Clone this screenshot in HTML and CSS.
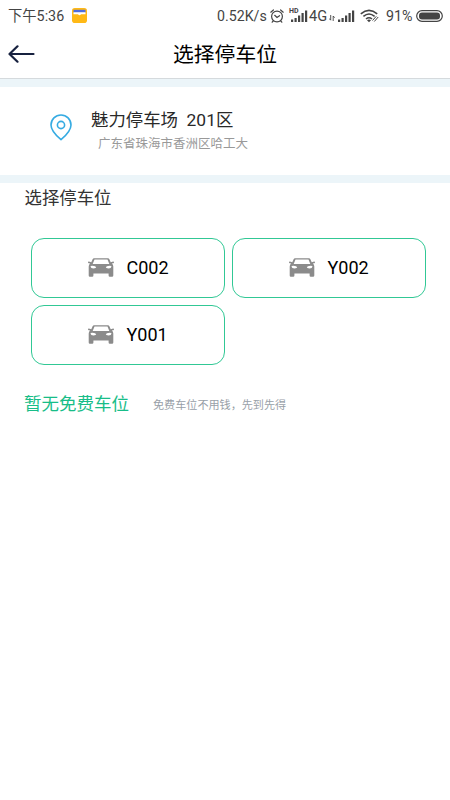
FILE: index.html
```html
<!DOCTYPE html>
<html lang="zh-CN">
<head>
<meta charset="utf-8">
<title>选择停车位</title>
<link rel="stylesheet" href="styles.css">
</head>
<body>
<svg class="defs" width="0" height="0">
  <symbol id="car" viewBox="0 0 26 19">
    <path fill="#8b8b8b" fill-rule="evenodd" d="M6.2.2h13.6q1.2 0 1.6 1l1.3 3.1 2.5-.8q.8 0 .8.8t-.8 1l-1.4.3q1.500 1.200 1.500 3v9q0 1.200-1.200 1.200h-2.300q-1.200 0-1.200-1.200v-2.200H5.400v2.200q0 1.200-1.200 1.200H1.900Q.7 18.800.7 17.600v-9q0-1.800 1.500-3L.8 5.300Q0 5.100 0 4.300t.8-.8l2.500.8L4.600 1.200q.4-1 1.600-1zM6.500 1.600 4.700 6h16.600l-1.800-4.400zM2.600 7.900q0 2.500 3 2.500 2.600 0 2.600-1.100-.6-1.900-5.600-1.400zm20.800 0q-5-.5-5.600 1.400 0 1.100 2.600 1.100 3 0 3-2.500z"/>
  </symbol>
  <symbol id="bars" viewBox="0 0 17 12">
    <path fill="#444" d="M0 9.500h2.200V12H0zM3.500 8h2.200v4H3.500zM7 5.500h2.200V12H7zM10.500 3h2.200v9h-2.200zM14 .5h2.200V12H14z"/>
  </symbol>
</svg>
<header class="status">
  <span class="time">下午5:36</span>
  <svg class="note" viewBox="0 0 15 15"><rect width="15" height="15" rx="2.800" fill="#ffb916"/><path fill="#4d6ce0" d="M1.500 1.800h12v3h-12z"/><path fill="#fff" d="M1.500 4.200h12v2H9q-1.500 2-3 0H1.500z"/></svg>
  <span class="speed">0.52K/s</span>
  <svg class="alarm" viewBox="0 0 14 14" fill="none" stroke="#444" stroke-width="1.200" stroke-linecap="round"><circle cx="7" cy="7.500" r="5.400"/><path d="M.8 3.200 3.400 1M13.200 3.200 10.600 1M4.700 6.300 7 8.500l2.500-1.800M3.200 12l-1 1.200M10.800 12l1 1.200"/></svg>
  <span class="hd"><svg class="bars"><use href="#bars"/></svg><b>HD</b></span>
  <span class="net">4G</span>
  <svg class="updown" viewBox="0 0 6 6" fill="none" stroke="#444" stroke-width=".9"><path d="M1.700 0v5M.2 3.500l1.500 1.800M4.200 6V1M4.200 1l1.500 1.700"/></svg>
  <svg class="bars"><use href="#bars"/></svg>
  <svg class="wifi" viewBox="0 0 20 14" fill="none" stroke="#444" stroke-width="1.600"><path d="M.8 4.800q8.200-7 16.400 0M3.400 7.400q5.600-4.800 11.200 0M6 10q3-2.500 6 0"/><path fill="#444" stroke="none" d="M7 11.200q2-1.500 4 0l-2 2z"/><path stroke-width="1" d="m12.500 11.500 3.800-4.200M14.300 12.500 18.200 8"/></svg>
  <span class="percent">91%</span>
  <svg class="battery" viewBox="0 0 27 12"><rect x=".7" y=".7" width="25.600" height="10.600" rx="5.300" fill="#fff" stroke="#444" stroke-width="1.200"/><rect x="3" y="2.500" width="21" height="7" rx="3" fill="#444"/></svg>
</header>
<nav class="bar">
  <svg class="back" viewBox="0 0 27 18" fill="none" stroke="#17213f" stroke-width="2.200" stroke-linecap="round" stroke-linejoin="round"><path d="M25.500 9H1.500M9.500 1.300 1.500 9l8 7.700"/></svg>
  <h1>选择停车位</h1>
</nav>
<section class="lot">
  <svg class="pin" viewBox="0 0 22 27" fill="none" stroke="#36abe2" stroke-width="1.600" stroke-linejoin="round"><path d="M11 25.700Q1 17.300 1 11a10 10 0 0 1 20 0Q21 17.300 11 25.700z"/><circle cx="11" cy="11" r="3.600"/></svg>
  <div>
    <h2>魅力停车场&nbsp; 201区</h2>
    <p>广东省珠海市香洲区哈工大</p>
  </div>
</section>
<main>
  <h3>选择停车位</h3>
  <div class="slots">
    <div class="slot"><svg><use href="#car"/></svg><span>C002</span></div>
    <div class="slot"><svg><use href="#car"/></svg><span>Y002</span></div>
    <div class="slot"><svg><use href="#car"/></svg><span>Y001</span></div>
  </div>
  <div class="free"><strong>暂无免费车位</strong><span>免费车位不用钱，先到先得</span></div>
</main>
</body>
</html>
```
FILE: styles.css
```css
* { box-sizing: border-box; margin: 0; padding: 0; }
body { width: 450px; height: 800px; overflow: hidden; background: #fff; font-family: Roboto, "Noto Sans CJK SC", sans-serif; color: #000; }
svg { display: block; flex: none; }
.defs { position: absolute; }
h1, h2, h3, strong { font-weight: 400; }
.status { height: 30px; display: flex; align-items: center; color: #444; font-size: 14px; line-height: 30px; padding: 1px 7px 0 8px; white-space: nowrap; }
.time { width: 64px; font-size: 14.3px; }
.note { width: 15px; height: 15px; }
.speed { margin-left: auto; width: 53px; font-size: 14.2px; }
.alarm { width: 14px; height: 14px; }
.bars { width: 17px; height: 12px; }
.hd { position: relative; margin-left: 6px; width: 19px; padding-left: 1px; }
.hd b { position: absolute; left: -1px; top: -2px; font-size: 7px; line-height: 7px; background: #fff; }
.net { width: 20px; font-size: 14.6px; }
.updown { width: 6px; height: 6px; margin: 4px 3px 0 0; }
.wifi { width: 20px; height: 14px; margin-left: 5px; }
.percent { width: 30px; margin-left: 6px; font-size: 14.3px; }
.battery { width: 27px; height: 12px; }
.bar { height: 49px; display: grid; grid-template-columns: 27px 1fr 27px; align-items: center; padding: 0 8px; border-bottom: 1px solid #d5dadd; }
.back { width: 27px; height: 18px; }
.bar h1 { font-size: 20.8px; line-height: 46px; padding-top: 2px; text-align: center; }
.lot { height: 104px; display: flex; border: solid #ecf5f9; border-width: 8px 0; padding: 21px 0 0 50px; }
.pin { width: 22px; height: 27px; margin-top: 6px; }
.lot div { margin-left: 19px; }
.lot h2 { font-size: 17.4px; line-height: 24px; color: #292929; }
.lot p { margin-left: 7px; font-size: 12.5px; line-height: 24px; color: #999; }
h3 { margin: 2px 0 0 24.5px; font-size: 17.4px; line-height: 26px; color: #333; }
.slots { display: grid; grid-template-columns: 194px 194px; grid-auto-rows: 60px; gap: 7px; margin: 26.5px 0 0 31px; }
.slot { display: flex; align-items: center; border: 1px solid #31c895; border-radius: 13px; padding-left: 55.5px; font-size: 18px; }
.slot svg { width: 26px; height: 19px; margin-right: 13px; }
.free { display: flex; align-items: center; margin: 23.5px 0 0 24px; line-height: 28px; }
.free strong { width: 129px; font-size: 17.5px; color: #18bd88; }
.free span { font-size: 11.1px; color: #98a0a8; padding-top: 4px; }
```
